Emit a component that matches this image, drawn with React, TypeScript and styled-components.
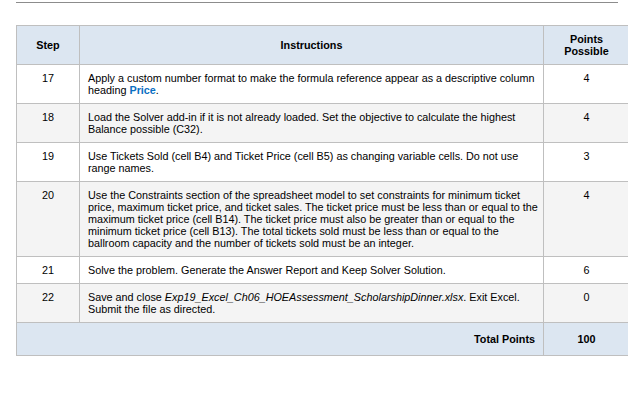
import React from "react";
import styled, { createGlobalStyle } from "styled-components";

const GlobalStyle = createGlobalStyle`
  body {
    margin: 0;
    background: #ffffff;
    font-family: "Liberation Sans", Arial, sans-serif;
    color: #000;
    overflow: hidden;
  }
`;

const Page = styled.div`
  width: 628px;
  height: 398px;
  padding: 2px 0 0 16px;
  box-sizing: border-box;
`;

const Rule = styled.div`
  width: 602px;
  height: 1px;
  background: #8c8c8c;
  margin-bottom: 22px;
`;

const Table = styled.table`
  width: 613px;
  border-collapse: collapse;
  table-layout: fixed;
  font-size: 10.8px;
  line-height: 12px;
`;

const Col = styled.col<{ $w: number }>`
  width: ${(p) => p.$w}px;
`;

const HeadCell = styled.th`
  height: 38px;
  padding: 0 4px;
  background: #dce6f1;
  border: 1px solid #bfbfbf;
  font-weight: bold;
  text-align: center;
  vertical-align: middle;
`;

const Row = styled.tr<{ $shade?: boolean }>`
  background: ${(p) => (p.$shade ? "#f4f4f4" : "#ffffff")};
`;

const Cell = styled.td<{ $center?: boolean }>`
  border: 1px solid #bfbfbf;
  padding: ${(p) => (p.$center ? "7px 4px 7px" : "7px 3px 7px 8px")};
  vertical-align: top;
  text-align: ${(p) => (p.$center ? "center" : "left")};
`;

const Highlight = styled.span`
  color: #0a6fc2;
  font-weight: bold;
`;

const TotalRow = styled.tr`
  background: #dce6f1;
  font-weight: bold;
`;

const TotalCell = styled.td<{ $center?: boolean }>`
  height: 32px;
  border: 1px solid #bfbfbf;
  padding: 0 8px;
  vertical-align: middle;
  text-align: ${(p) => (p.$center ? "center" : "right")};
`;

type Step = { n: number; text: React.ReactNode; pts: number };

const steps: Step[] = [
  {
    n: 17,
    text: (
      <>
        Apply a custom number format to make the formula reference appear as a descriptive column
        heading <Highlight>Price</Highlight>.
      </>
    ),
    pts: 4,
  },
  {
    n: 18,
    text: "Load the Solver add-in if it is not already loaded. Set the objective to calculate the highest Balance possible (C32).",
    pts: 4,
  },
  {
    n: 19,
    text: "Use Tickets Sold (cell B4) and Ticket Price (cell B5) as changing variable cells. Do not use range names.",
    pts: 3,
  },
  {
    n: 20,
    text: "Use the Constraints section of the spreadsheet model to set constraints for minimum ticket price, maximum ticket price, and ticket sales. The ticket price must be less than or equal to the maximum ticket price (cell B14). The ticket price must also be greater than or equal to the minimum ticket price (cell B13). The total tickets sold must be less than or equal to the ballroom capacity and the number of tickets sold must be an integer.",
    pts: 4,
  },
  {
    n: 21,
    text: "Solve the problem. Generate the Answer Report and Keep Solver Solution.",
    pts: 6,
  },
  {
    n: 22,
    text: (
      <>
        Save and close <i>Exp19_Excel_Ch06_HOEAssessment_ScholarshipDinner.xlsx</i>. Exit Excel.
        Submit the file as directed.
      </>
    ),
    pts: 0,
  },
];

export default function App() {
  return (
    <Page>
      <GlobalStyle />
      <Rule />
      <Table>
        <colgroup>
          <Col $w={63} />
          <Col $w={464} />
          <Col $w={86} />
        </colgroup>
        <thead>
          <tr>
            <HeadCell>Step</HeadCell>
            <HeadCell>Instructions</HeadCell>
            <HeadCell>
              Points
              <br />
              Possible
            </HeadCell>
          </tr>
        </thead>
        <tbody>
          {steps.map((s, i) => (
            <Row key={s.n} $shade={i % 2 === 1}>
              <Cell $center>{s.n}</Cell>
              <Cell>{s.text}</Cell>
              <Cell $center>{s.pts}</Cell>
            </Row>
          ))}
          <TotalRow>
            <TotalCell colSpan={2}>Total Points</TotalCell>
            <TotalCell $center>100</TotalCell>
          </TotalRow>
        </tbody>
      </Table>
    </Page>
  );
}
